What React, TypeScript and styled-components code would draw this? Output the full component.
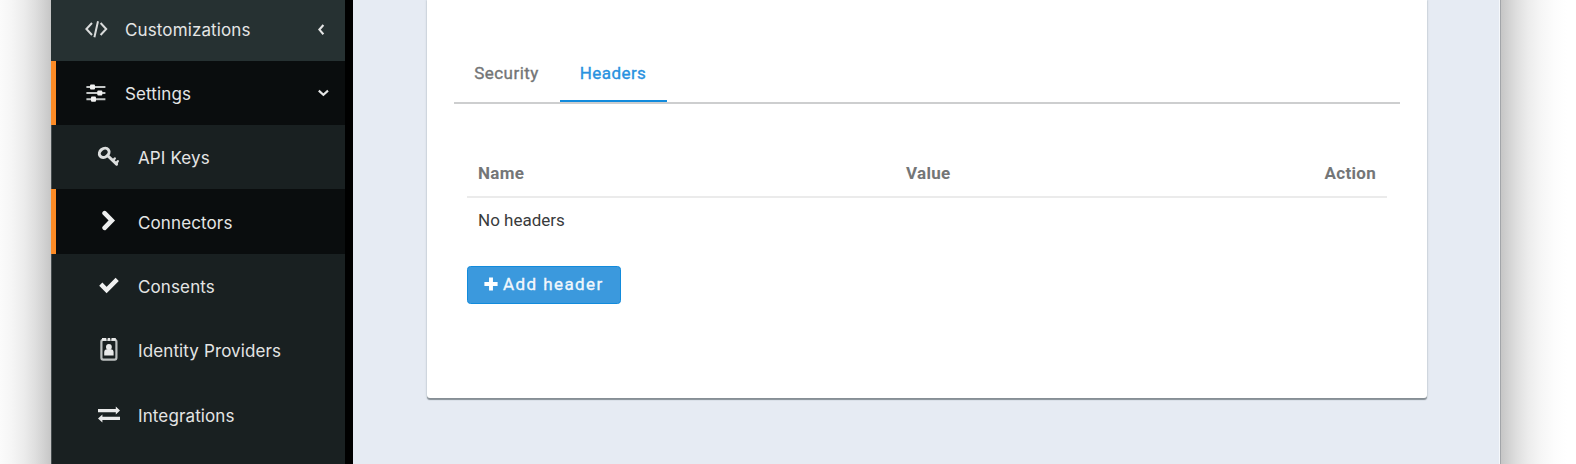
import React from 'react';
import styled, { createGlobalStyle } from 'styled-components';

const GlobalStyle = createGlobalStyle`
  * { box-sizing: border-box; }
  body { margin: 0; background: #fff; overflow: hidden; -webkit-font-smoothing: antialiased; }
`;

const Page = styled.div`
  display: flex;
  height: 464px;
  overflow: hidden;
  font-family: Roboto, "Liberation Sans", sans-serif;
`;

const Shade = styled.div<{ $side: 'left' | 'right' }>`
  flex: none;
  width: ${({ $side }) => ($side === 'left' ? '51px' : '75px')};
  background: linear-gradient(
    to ${({ $side }) => $side},
    #c6c6c6 0,
    #d3d3d3 8px,
    #dfdfdf 16px,
    #ececec 27px,
    #f6f6f6 40px,
    #fcfcfc 53px,
    #fff 66px
  );
`;

const Window = styled.div`
  display: flex;
  flex: 1;
  min-width: 0;
  border-right: 1px solid #a2a5a9;
`;

const Sidebar = styled.nav`
  flex: none;
  width: 302px;
  background: #192021;
  border-right: 8px solid #000;
  box-shadow: inset 1px 0 #454c4e;
  font-family: Inter, "Liberation Sans", sans-serif;
`;

const MenuList = styled.ul`
  margin: -3.7px 0 0;
  padding: 0;
  list-style: none;
`;

const MenuItem = styled.li<{ $tone?: 'parent' | 'active'; $nested?: boolean }>`
  display: flex;
  align-items: center;
  height: 64.4px;
  padding-left: ${({ $nested }) => ($nested ? '41px' : '28px')};
  padding-right: 15px;
  border-left: 5px solid ${({ $tone }) => ($tone === 'active' ? '#fd8b25' : 'transparent')};
  background: ${({ $tone }) =>
    $tone === 'active' ? '#0a0d0e' : $tone === 'parent' ? '#263132' : 'transparent'};
  color: #e4e5e5;
`;

const IconSlot = styled.span`
  display: flex;
  flex: none;
  width: 24px;
  height: 24px;
  margin-right: 17px;
  svg { display: block; }
`;

const MenuLabel = styled.span`
  flex: 1;
  padding-top: 2px;
  font-size: 17px;
  line-height: 22px;
  letter-spacing: 0.12px;
`;

const Caret = styled.svg`
  flex: none;
  width: 16px;
  height: 16px;
  margin-top: 3px;
  fill: none;
  stroke: #e4e5e5;
  stroke-width: 2.1;
`;

const Content = styled.main`
  flex: 1;
  min-width: 0;
  padding: 0 72px 0 74px;
  background: #e6ebf3;
  border-right: 1px solid #f6f8fb;
`;

const Card = styled.section`
  height: 397.5px;
  padding: 40px 27px 0;
  background: #fff;
  border-radius: 0 0 3px 3px;
  box-shadow: 0 1.5px 1px #868e95, 0 0 2px 1px #d3dae1;
`;

const Tabs = styled.div`
  display: flex;
  height: 64px;
  border-bottom: 2px solid #cdcecf;
`;

const Tab = styled.button<{ $active?: boolean }>`
  flex: none;
  width: ${({ $active }) => ($active ? '107px' : '106px')};
  padding: 6px 1px 0 0;
  border: 0;
  border-bottom: 2.5px solid ${({ $active }) => ($active ? '#118bdd' : 'transparent')};
  background: none;
  color: ${({ $active }) => ($active ? '#2992df' : '#737576')};
  font: 400 17px/22px Roboto, sans-serif;
  letter-spacing: 0.45px;
  -webkit-text-stroke: 0.35px currentColor;
`;

const TabPanel = styled.div`
  padding: 46px 13px 0;
`;

const Table = styled.table`
  width: 100%;
  border-collapse: separate;
  border-spacing: 0;
  font-size: 17px;
  line-height: 22px;
`;

const HeadCell = styled.th<{ $align?: 'right' }>`
  height: 48px;
  padding: 0 11px 0;
  border-bottom: 2px solid #ebebeb;
  color: #747677;
  font-weight: 700;
  letter-spacing: 0.3px;
  text-align: ${({ $align }) => $align ?? 'left'};
`;

const Cell = styled.td`
  height: 46px;
  padding: 0 11px 2px;
  color: #393b3c;
`;

const AddButton = styled.button`
  display: flex;
  align-items: center;
  width: 154px;
  height: 37.5px;
  margin-top: 22px;
  padding: 0 0 1px 16px;
  border: 1px solid #128bdc;
  border-radius: 3.5px;
  background: #3b99dd;
  color: #f1f7fc;
  font: 400 17px/22px Roboto, sans-serif;
  letter-spacing: 1.42px;
  -webkit-text-stroke: 0.35px currentColor;
  white-space: nowrap;
  svg { flex: none; margin: 0 5px 0 0; }
`;

const CodeIcon = () => (
  <svg width="24" height="24" viewBox="0 0 24 24" fill="none" stroke="#d9dbdb" strokeWidth="2">
    <path d="M8 6 2.4 12 8 18M16.6 6l5.6 6-5.6 6M14 4.2l-3.6 16" />
  </svg>
);

const SlidersIcon = () => (
  <svg width="24" height="24" viewBox="0 0 24 24">
    <path d="M2.4 6h19M2.4 12h19M2.4 18.2h19" stroke="#c4c7c7" strokeWidth="1.9" />
    <g fill="#f1f1f1">
      <rect x="6" y="3.4" width="5" height="5.2" rx="1" />
      <rect x="13.3" y="9.4" width="5" height="5.2" rx="1" />
      <rect x="7" y="15.6" width="5" height="5.2" rx="1" />
    </g>
  </svg>
);

const KeyIcon = () => (
  <svg width="24" height="24" viewBox="0 0 24 24" fill="none" stroke="#dcdede" strokeWidth="3" strokeLinecap="round">
    <ellipse cx="7.2" cy="7.8" rx="5.2" ry="4.2" transform="rotate(-38 7.2 7.8)" />
    <path d="m11 11 8.6 8.2" />
    <path d="m15.8 15.6 2-2.2M18.8 18.6l2-2.4" strokeWidth="2.3" />
  </svg>
);

const ChevronIcon = () => (
  <svg width="24" height="24" viewBox="0 0 24 24" fill="none" stroke="#eeefef" strokeWidth="4.6">
    <path d="m7.6 3.2 7.2 7.2-7.2 7.4" strokeLinecap="round" strokeLinejoin="miter" />
  </svg>
);

const CheckIcon = () => (
  <svg width="24" height="24" viewBox="0 0 24 24" fill="none" stroke="#f0f1f1" strokeWidth="4.5">
    <path d="m3.8 10.2 5.8 5.8L20.2 5.4" />
  </svg>
);

const BadgeIcon = () => (
  <svg width="24" height="24" viewBox="0 0 24 24">
    <rect x="4.4" y="1.8" width="15" height="19.8" rx="1.8" fill="none" stroke="#bcc0c0" strokeWidth="2.2" />
    <path d="M5 1.4h4.4M14.4 1.4h4.4M10.6 1.4h2.6" stroke="#e8e9e9" strokeWidth="2.6" />
    <path d="M10 0v2.6M13.8 0v2.6" stroke="#192021" strokeWidth="0.8" />
    <circle cx="11.9" cy="9" r="2.9" fill="#e9eaea" />
    <path d="M7.2 17.5v-3.2a3 3 0 0 1 3-3h3.4a3 3 0 0 1 3 3v3.2z" fill="#e9eaea" />
  </svg>
);

const ExchangeIcon = () => (
  <svg width="24" height="24" viewBox="0 0 24 24" fill="#e9eaea">
    <path d="M1 6h17.8V3.6l4.2 4-4.2 4V9.3H1z" />
    <path d="M23 13.7H5.4v-2.3l-4.4 4 4.4 4V17H23z" />
  </svg>
);

const PlusIcon = () => (
  <svg width="14" height="14" viewBox="0 0 14 14" stroke="#fff" strokeWidth="3.9">
    <path d="M7 .4v13.2M.4 7h13.2" />
  </svg>
);

const nested = [
  { label: 'API Keys', Icon: KeyIcon },
  { label: 'Connectors', Icon: ChevronIcon, active: true },
  { label: 'Consents', Icon: CheckIcon },
  { label: 'Identity Providers', Icon: BadgeIcon },
  { label: 'Integrations', Icon: ExchangeIcon },
];

export default function App() {
  return (
    <>
      <GlobalStyle />
      <Page>
        <Shade $side="left" />
        <Window>
          <Sidebar>
            <MenuList>
              <MenuItem $tone="parent">
                <IconSlot><CodeIcon /></IconSlot>
                <MenuLabel>Customizations</MenuLabel>
                <Caret viewBox="0 0 16 16"><path d="M9.4 3 5.4 7.6l4 4.6" /></Caret>
              </MenuItem>
              <MenuItem $tone="active">
                <IconSlot><SlidersIcon /></IconSlot>
                <MenuLabel>Settings</MenuLabel>
                <Caret viewBox="0 0 16 16"><path d="m4.8 4.6 4.6 4.2L14 4.6" /></Caret>
              </MenuItem>
              {nested.map(({ label, Icon, active }) => (
                <MenuItem key={label} $nested $tone={active ? 'active' : undefined}>
                  <IconSlot><Icon /></IconSlot>
                  <MenuLabel>{label}</MenuLabel>
                </MenuItem>
              ))}
            </MenuList>
          </Sidebar>
          <Content>
            <Card>
              <Tabs>
                <Tab>Security</Tab>
                <Tab $active>Headers</Tab>
              </Tabs>
              <TabPanel>
                <Table>
                  <colgroup>
                    <col width="428" />
                    <col />
                    <col width="200" />
                  </colgroup>
                  <thead>
                    <tr>
                      <HeadCell>Name</HeadCell>
                      <HeadCell>Value</HeadCell>
                      <HeadCell $align="right">Action</HeadCell>
                    </tr>
                  </thead>
                  <tbody>
                    <tr>
                      <Cell colSpan={3}>No headers</Cell>
                    </tr>
                  </tbody>
                </Table>
                <AddButton><PlusIcon />Add header</AddButton>
              </TabPanel>
            </Card>
          </Content>
        </Window>
        <Shade $side="right" />
      </Page>
    </>
  );
}
